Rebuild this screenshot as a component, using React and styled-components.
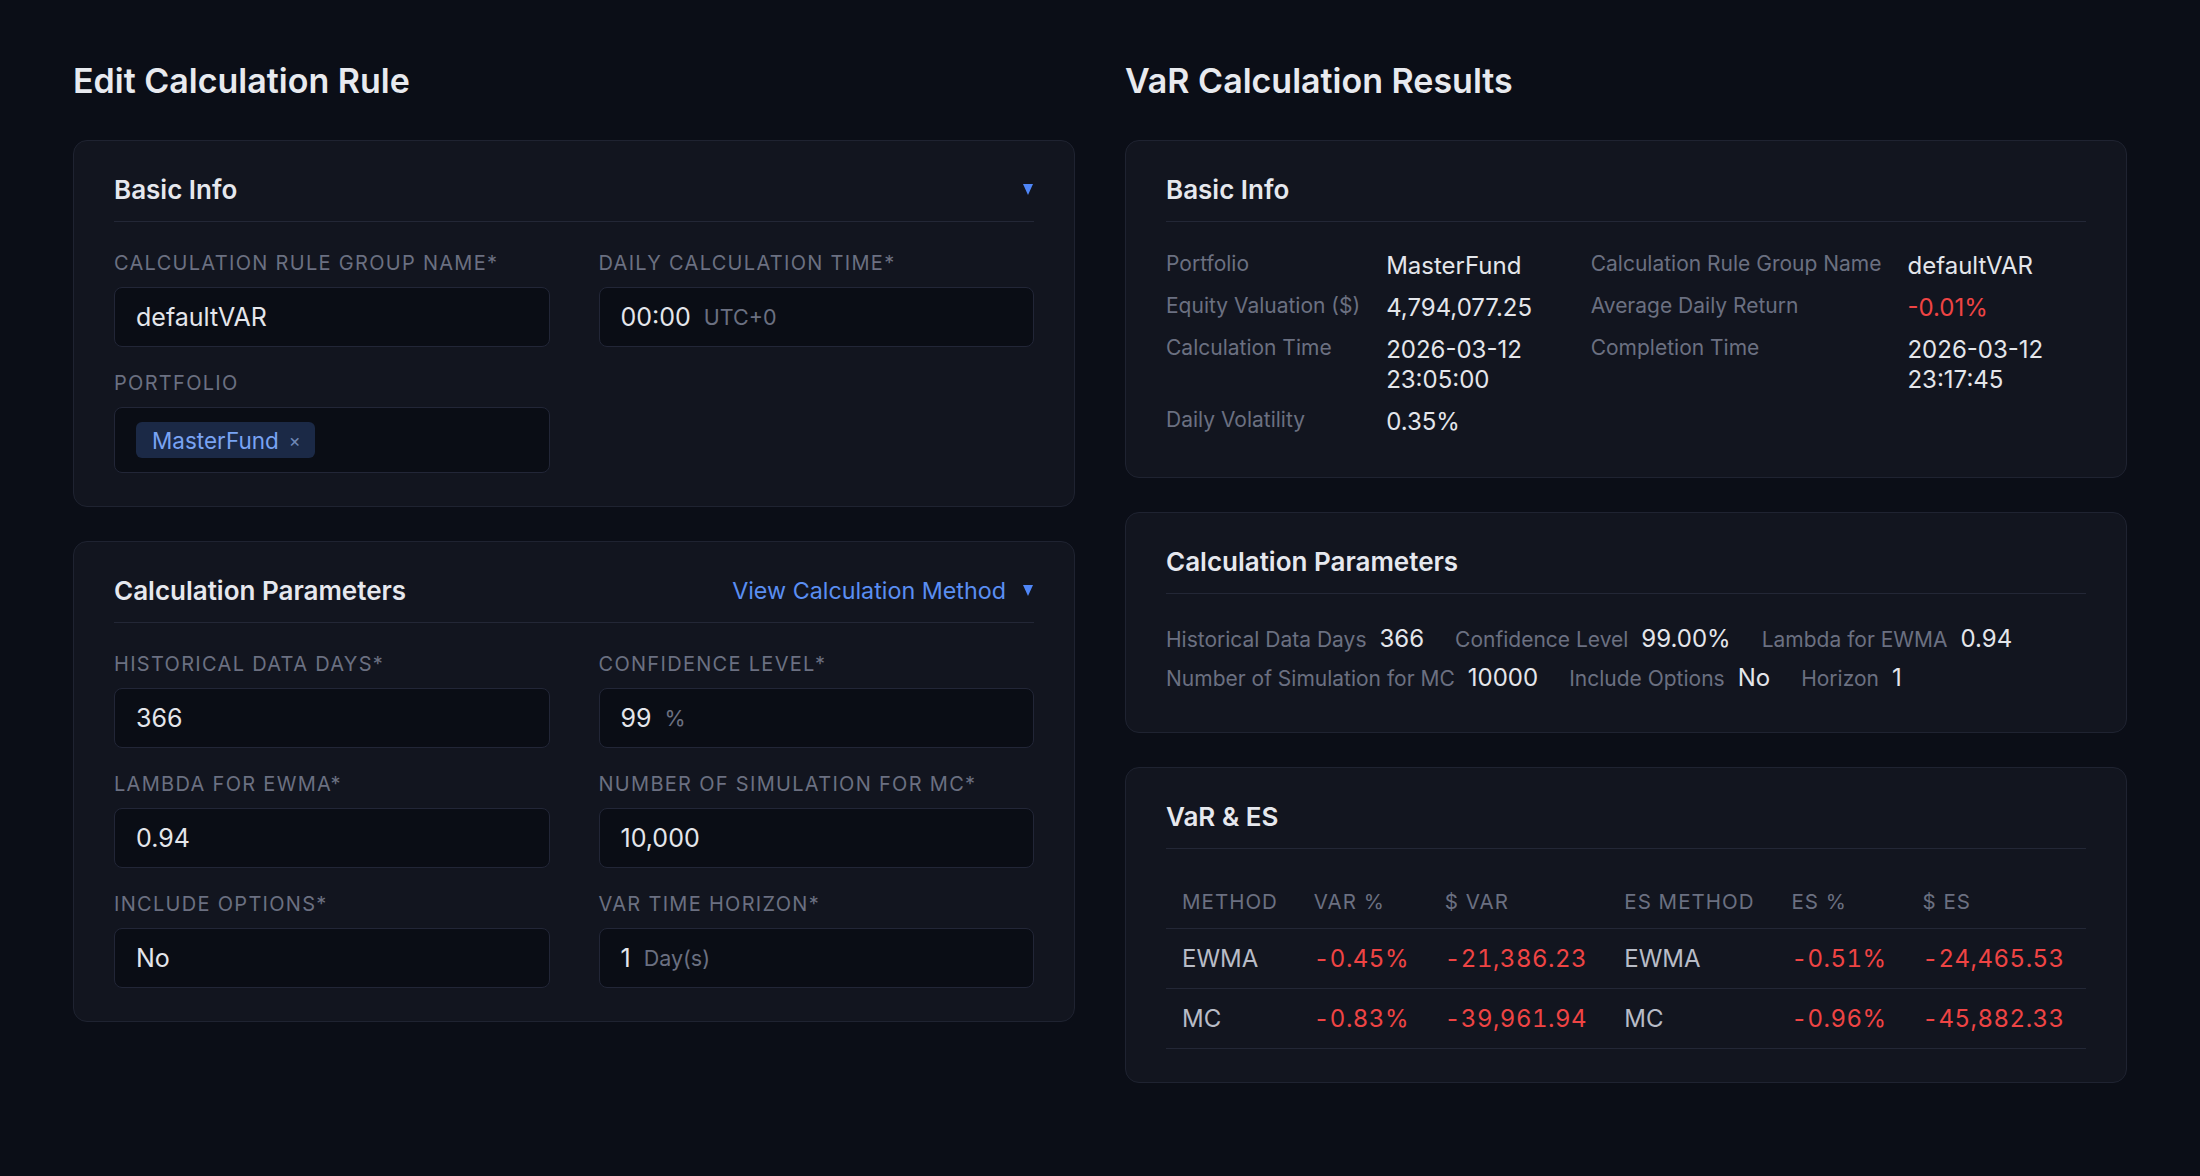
import React from 'react'
import styled, { createGlobalStyle } from 'styled-components'

const GlobalStyle = createGlobalStyle`
  * { box-sizing: border-box; }
  html, body { margin: 0; padding: 0; background: #0b0e17; }
  body {
    font-family: 'Inter', 'Noto Sans', sans-serif;
    color: #e6e8ee;
    -webkit-font-smoothing: antialiased;
  }
`

const Page = styled.main`
  min-height: 1176px;
  padding: 60px 73px;
  display: grid;
  grid-template-columns: 1fr 1fr;
  column-gap: 50px;
  align-items: start;
`

const Column = styled.section`
  display: flex;
  flex-direction: column;
  min-width: 0;
`

const PageTitle = styled.h1`
  margin: 0 0 39px;
  font-size: 34px;
  font-weight: 600;
  line-height: normal;
  color: #e8eaef;
`

const Stack = styled.div`
  display: flex;
  flex-direction: column;
  gap: 34px;
`

const Card = styled.div`
  background: #12151f;
  border: 1px solid #1f2331;
  border-radius: 14px;
  padding: 33px 40px;
`

const CardHeader = styled.div`
  display: flex;
  align-items: center;
  justify-content: space-between;
  padding-bottom: 16px;
  border-bottom: 1px solid #232736;
`

const CardTitle = styled.h2`
  margin: 0;
  font-size: 26px;
  font-weight: 600;
  line-height: normal;
  color: #e6e8ee;
`

const Caret = styled.span`
  width: 0;
  height: 0;
  border-left: 5.5px solid transparent;
  border-right: 5.5px solid transparent;
  border-top: 11px solid #4f86f7;
  margin-right: 1px;
`

const HeaderLink = styled.a`
  display: flex;
  align-items: center;
  gap: 17px;
  font-size: 23.3px;
  line-height: normal;
  color: #5a8ef2;
  text-decoration: none;
  cursor: pointer;
`

/* ---------- form ---------- */

const FormGrid = styled.div`
  margin-top: 29px;
  display: grid;
  grid-template-columns: 1fr 1fr;
  column-gap: 49px;
  row-gap: 24px;
`

const Field = styled.div`
  display: flex;
  flex-direction: column;
  min-width: 0;
`

const Label = styled.label`
  margin-bottom: 11px;
  font-size: 20px;
  line-height: 25px;
  letter-spacing: 0.065em;
  text-transform: uppercase;
  color: #6b7081;
`

const InputBox = styled.div`
  height: ${p => (p.$tall ? '66px' : '60px')};
  display: flex;
  align-items: center;
  gap: 13px;
  padding: 0 21px;
  background: #0a0d15;
  border: 1px solid #222637;
  border-radius: 8px;
  font-size: 25px;
  color: #e4e6eb;
`

const Suffix = styled.span`
  font-size: 21.5px;
  color: #6b7081;
`

const Tag = styled.span`
  display: inline-flex;
  align-items: center;
  gap: 10px;
  height: 36px;
  padding: 0 14px 0 16px;
  border-radius: 6px;
  background: #1b2946;
  color: #79a3f3;
  font-size: 22.5px;
`

const TagClose = styled.span`
  font-size: 18px;
  color: #6f87b6;
  cursor: pointer;
`

/* ---------- results ---------- */

const InfoGrid = styled.dl`
  margin: 29px 0 7px;
  display: grid;
  grid-template-columns: max-content minmax(0, 1fr) max-content minmax(0, 1fr);
  column-gap: 26px;
  row-gap: 12px;
  align-items: start;
`

const InfoLabel = styled.dt`
  margin: 0;
  font-size: 21px;
  line-height: normal;
  color: #6b7081;
`

const InfoValue = styled.dd`
  margin: 0;
  font-size: 24px;
  line-height: 30px;
  color: ${p => (p.$negative ? '#ef4444' : '#e4e6eb')};
`

const ParamList = styled.div`
  margin: 30px 0 7px;
  display: flex;
  flex-wrap: wrap;
  column-gap: 31px;
  row-gap: 10px;
`

const Param = styled.div`
  display: flex;
  align-items: baseline;
  gap: 13px;
`

const ParamLabel = styled.span`
  font-size: 21px;
  color: #6b7081;
`

const ParamValue = styled.span`
  font-size: 24px;
  color: #e4e6eb;
`

const Table = styled.table`
  margin-top: 22px;
  width: 100%;
  border-collapse: collapse;
`

const Th = styled.th`
  padding: 18px 16px 14px;
  text-align: left;
  font-size: 20.5px;
  font-weight: 400;
  line-height: normal;
  letter-spacing: 0.05em;
  text-transform: uppercase;
  white-space: nowrap;
  color: #6b7081;
  border-bottom: 1px solid #232736;
`

const Td = styled.td`
  padding: 15px 16px;
  font-size: 24px;
  line-height: normal;
  white-space: nowrap;
  font-variant-numeric: tabular-nums;
  letter-spacing: ${p => (p.$negative ? '0.02em' : '0')};
  color: ${p => (p.$negative ? '#ef4444' : '#b8bcc7')};
  border-bottom: 1px solid #232736;
`

const basicInfo = [
  ['Portfolio', 'MasterFund', 'Calculation Rule Group Name', 'defaultVAR'],
  ['Equity Valuation ($)', '4,794,077.25', 'Average Daily Return', '-0.01%'],
  ['Calculation Time', '2026-03-12 23:05:00', 'Completion Time', '2026-03-12 23:17:45'],
  ['Daily Volatility', '0.35%', null, null],
]

const params = [
  ['Historical Data Days', '366'],
  ['Confidence Level', '99.00%'],
  ['Lambda for EWMA', '0.94'],
  ['Number of Simulation for MC', '10000'],
  ['Include Options', 'No'],
  ['Horizon', '1'],
]

const varRows = [
  ['EWMA', '-0.45%', '-21,386.23', 'EWMA', '-0.51%', '-24,465.53'],
  ['MC', '-0.83%', '-39,961.94', 'MC', '-0.96%', '-45,882.33'],
]

const formFields = [
  { label: 'Historical Data Days*', value: '366' },
  { label: 'Confidence Level*', value: '99', suffix: '%' },
  { label: 'Lambda for EWMA*', value: '0.94' },
  { label: 'Number of Simulation for MC*', value: '10,000' },
  { label: 'Include Options*', value: 'No' },
  { label: 'VaR Time Horizon*', value: '1', suffix: 'Day(s)' },
]

function FormField({ label, value, suffix }) {
  return (
    <Field>
      <Label>{label}</Label>
      <InputBox>
        <span>{value}</span>
        {suffix && <Suffix>{suffix}</Suffix>}
      </InputBox>
    </Field>
  )
}

export default function App() {
  return (
    <>
      <GlobalStyle />
      <Page>
        <Column>
          <PageTitle>Edit Calculation Rule</PageTitle>
          <Stack>
            <Card>
              <CardHeader>
                <CardTitle>Basic Info</CardTitle>
                <Caret />
              </CardHeader>
              <FormGrid>
                <FormField label="Calculation Rule Group Name*" value="defaultVAR" />
                <FormField label="Daily Calculation Time*" value="00:00" suffix="UTC+0" />
                <Field>
                  <Label>Portfolio</Label>
                  <InputBox $tall>
                    <Tag>
                      MasterFund
                      <TagClose>×</TagClose>
                    </Tag>
                  </InputBox>
                </Field>
              </FormGrid>
            </Card>

            <Card>
              <CardHeader>
                <CardTitle>Calculation Parameters</CardTitle>
                <HeaderLink>
                  View Calculation Method
                  <Caret />
                </HeaderLink>
              </CardHeader>
              <FormGrid>
                {formFields.map(f => (
                  <FormField key={f.label} {...f} />
                ))}
              </FormGrid>
            </Card>
          </Stack>
        </Column>

        <Column>
          <PageTitle>VaR Calculation Results</PageTitle>
          <Stack>
            <Card>
              <CardHeader>
                <CardTitle>Basic Info</CardTitle>
              </CardHeader>
              <InfoGrid>
                {basicInfo.map(([l1, v1, l2, v2]) => (
                  <React.Fragment key={l1}>
                    <InfoLabel>{l1}</InfoLabel>
                    <InfoValue>{v1}</InfoValue>
                    {l2 && <InfoLabel>{l2}</InfoLabel>}
                    {v2 && <InfoValue $negative={v2.startsWith('-')}>{v2}</InfoValue>}
                  </React.Fragment>
                ))}
              </InfoGrid>
            </Card>

            <Card>
              <CardHeader>
                <CardTitle>Calculation Parameters</CardTitle>
              </CardHeader>
              <ParamList>
                {params.map(([label, value]) => (
                  <Param key={label}>
                    <ParamLabel>{label}</ParamLabel>
                    <ParamValue>{value}</ParamValue>
                  </Param>
                ))}
              </ParamList>
            </Card>

            <Card>
              <CardHeader>
                <CardTitle>VaR &amp; ES</CardTitle>
              </CardHeader>
              <Table>
                <thead>
                  <tr>
                    <Th>Method</Th>
                    <Th>VaR %</Th>
                    <Th>$ VaR</Th>
                    <Th>ES Method</Th>
                    <Th>ES %</Th>
                    <Th>$ ES</Th>
                  </tr>
                </thead>
                <tbody>
                  {varRows.map(row => (
                    <tr key={row[0]}>
                      {row.map((cell, i) => (
                        <Td key={i} $negative={cell.startsWith('-')}>{cell}</Td>
                      ))}
                    </tr>
                  ))}
                </tbody>
              </Table>
            </Card>
          </Stack>
        </Column>
      </Page>
    </>
  )
}
